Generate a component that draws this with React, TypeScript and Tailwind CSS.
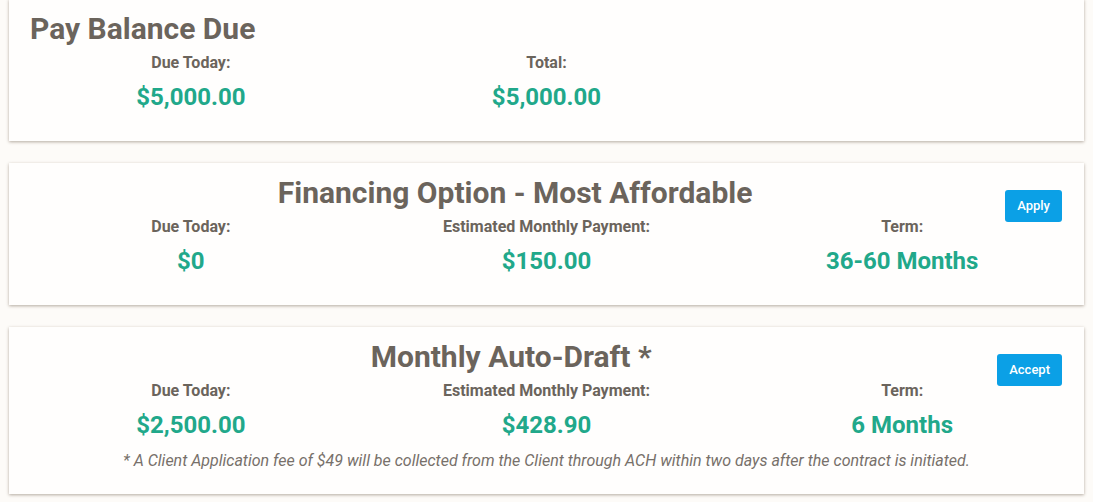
type Stat = { label: string; value: string }

const cards: {
  title: string
  left?: boolean
  stats: Stat[]
  action?: string
  note?: string
}[] = [
  {
    title: 'Pay Balance Due',
    left: true,
    stats: [
      { label: 'Due Today:', value: '$5,000.00' },
      { label: 'Total:', value: '$5,000.00' },
    ],
  },
  {
    title: 'Financing Option - Most Affordable',
    action: 'Apply',
    stats: [
      { label: 'Due Today:', value: '$0' },
      { label: 'Estimated Monthly Payment:', value: '$150.00' },
      { label: 'Term:', value: '36-60 Months' },
    ],
  },
  {
    title: 'Monthly Auto-Draft *',
    action: 'Accept',
    stats: [
      { label: 'Due Today:', value: '$2,500.00' },
      { label: 'Estimated Monthly Payment:', value: '$428.90' },
      { label: 'Term:', value: '6 Months' },
    ],
    note: '* A Client Application fee of $49 will be collected from the Client through ACH within two days after the contract is initiated.',
  },
]

export default function App() {
  return (
    <main className="min-h-screen bg-[#fdfbf8] px-[9px] font-['Roboto',sans-serif]">
      <div className="-mt-px flex flex-col gap-[22px]">
        {cards.map((card) => (
          <section
            key={card.title}
            className={`bg-[#fffefd] px-1 pt-3 shadow-[0_1px_3px_rgba(90,70,50,0.45)] ${card.note ? 'pb-[23px]' : 'pb-[29px]'}`}
          >
            {/* Header */}
            <div className="flex h-9 items-start">
              <h2
                className={`flex-1 text-[30px] leading-[36px] font-bold text-[#6b645c] ${card.left ? 'pl-[17px]' : 'pl-3 text-center'}`}
              >
                {card.title}
              </h2>
              {card.action && (
                <button className="mt-[15px] mr-[18px] h-8 shrink-0 rounded-[3px] bg-[#0ba0e6] px-3 text-[13px] font-medium text-white">
                  {card.action}
                </button>
              )}
            </div>

            <div className="grid grid-cols-3">
              {card.stats.map((s) => (
                <div key={s.label} className="flex flex-col items-center">
                  <span className="mt-[6px] text-[16px] leading-5 font-bold text-[#6b645c]">{s.label}</span>
                  <span className="mt-[9px] text-[24px] leading-[30px] font-bold text-[#21a88a]">{s.value}</span>
                </div>
              ))}
            </div>

            {card.note && (
              <p className="mt-[11px] text-center text-[16px] leading-5 text-[#77706a] italic">{card.note}</p>
            )}
          </section>
        ))}
      </div>
    </main>
  )
}
